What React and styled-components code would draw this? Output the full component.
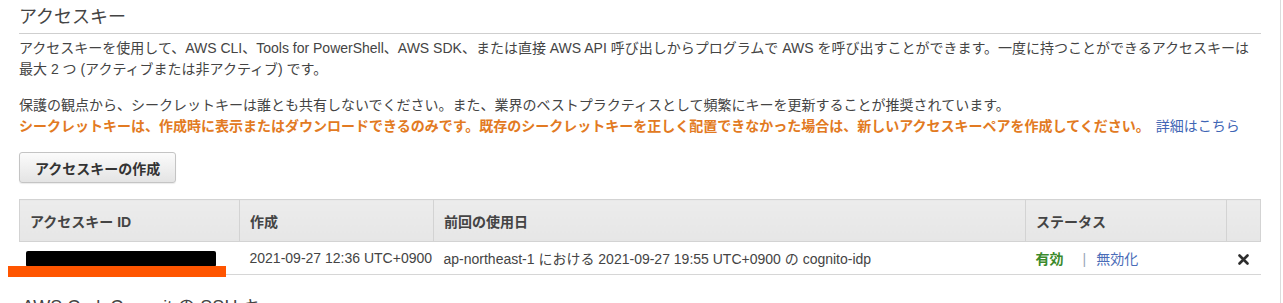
import React from "react";
import styled, { createGlobalStyle } from "styled-components";

const Global = createGlobalStyle`
  html, body { margin: 0; padding: 0; background: #fff; }
  body {
    font-family: "Liberation Sans", "Noto Sans CJK JP", sans-serif;
    font-size: 14px;
    color: #444;
  }
`;

const Panel = styled.div`
  width: 1242px;
  min-height: 303px;
  padding: 0 19px;
  border-right: 1px solid #dcdcdc;
  box-sizing: content-box;
  overflow: hidden;
`;

const Heading = styled.h2`
  margin: 0;
  padding: ${(p) => (p.$top ? "6px 0 5px" : "0")};
  font-size: 18px;
  line-height: 22px;
  font-weight: normal;
  color: #444;
  border-bottom: ${(p) => (p.$top ? "1px solid #cfcfcf" : "none")};
  margin-top: ${(p) => (p.$top ? "0" : "21px")};
  padding-left: ${(p) => (p.$top ? "0" : "3px")};
`;

const Intro = styled.div`
  padding-top: 4px;
`;

const Para = styled.p`
  margin: 0 0 15px;
  line-height: 21px;
  white-space: nowrap;
`;

const Warning = styled.span`
  color: #e27a22;
  font-weight: bold;
`;

const Link = styled.a`
  color: #3f66b5;
  text-decoration: none;
  margin-left: 6px;
  cursor: pointer;
`;

const CreateButton = styled.button`
  display: block;
  height: 31px;
  padding: 0 15px;
  margin: 0 0 16px;
  font-family: inherit;
  font-size: 14px;
  font-weight: bold;
  color: #333;
  background: linear-gradient(#fbfbfb, #e4e4e4);
  border: 1px solid #c4c4c4;
  border-radius: 3px;
  box-shadow: 0 1px 1px rgba(0, 0, 0, 0.08);
`;

const Table = styled.table`
  width: 1241px;
  border-collapse: collapse;
  table-layout: fixed;
`;

const Th = styled.th`
  height: 41px;
  padding: 0 10px;
  text-align: left;
  font-weight: bold;
  font-size: 14px;
  color: #444;
  background: linear-gradient(#ececec, #e6e6e6);
  border: 1px solid #d3d3d3;
`;

const Td = styled.td`
  position: relative;
  height: 32px;
  padding: 0 10px;
  font-size: 14px;
  color: #444;
  white-space: nowrap;
  border-bottom: 1px solid #d6d6d6;
  text-align: ${(p) => (p.$center ? "center" : "left")};
`;

const Redacted = styled.span`
  display: inline-block;
  width: 190px;
  height: 16px;
  background: #000;
  border-radius: 2px;
  vertical-align: middle;
  margin-left: -4px;
`;

const RedactBar = styled.span`
  position: absolute;
  left: -12px;
  top: 24px;
  width: 218px;
  height: 11px;
  background: #ff5500;
`;

const Active = styled.span`
  color: #3b8a2c;
  font-weight: bold;
`;

const Sep = styled.span`
  color: #9aa6b8;
  margin: 0 10px 0 19px;
`;

const Deactivate = styled.a`
  color: #4a6cb8;
  cursor: pointer;
`;

const CloseIcon = () => (
  <svg width="11" height="11" viewBox="0 0 11 11" style={{ verticalAlign: "middle" }}>
    <path d="M1.5 1.5 L9.5 9.5 M9.5 1.5 L1.5 9.5" stroke="#2e2e2e" strokeWidth="2.6" strokeLinecap="round" />
  </svg>
);

export default function App() {
  return (
    <>
      <Global />
      <Panel>
        <Heading $top>アクセスキー</Heading>
        <Intro>
          <Para>
            アクセスキーを使用して、AWS CLI、Tools for PowerShell、AWS SDK、または直接 AWS API 呼び出しからプログラムで AWS を呼び出すことができます。一度に持つことができるアクセスキーは
            <br />
            最大 2 つ (アクティブまたは非アクティブ) です。
          </Para>
          <Para>
            保護の観点から、シークレットキーは誰とも共有しないでください。また、業界のベストプラクティスとして頻繁にキーを更新することが推奨されています。
            <br />
            <Warning>
              シークレットキーは、作成時に表示またはダウンロードできるのみです。既存のシークレットキーを正しく配置できなかった場合は、新しいアクセスキーペアを作成してください。
            </Warning>
            <Link>詳細はこちら</Link>
          </Para>
        </Intro>
        <CreateButton>アクセスキーの作成</CreateButton>
        <Table>
          <colgroup>
            <col style={{ width: 220 }} />
            <col style={{ width: 194 }} />
            <col style={{ width: 592 }} />
            <col style={{ width: 201 }} />
            <col style={{ width: 34 }} />
          </colgroup>
          <thead>
            <tr>
              <Th>アクセスキー ID</Th>
              <Th>作成</Th>
              <Th>前回の使用日</Th>
              <Th>ステータス</Th>
              <Th />
            </tr>
          </thead>
          <tbody>
            <tr>
              <Td>
                <Redacted />
                <RedactBar />
              </Td>
              <Td>2021-09-27 12:36 UTC+0900</Td>
              <Td>ap-northeast-1 における 2021-09-27 19:55 UTC+0900 の cognito-idp</Td>
              <Td>
                <Active>有効</Active>
                <Sep>|</Sep>
                <Deactivate>無効化</Deactivate>
              </Td>
              <Td $center>
                <CloseIcon />
              </Td>
            </tr>
          </tbody>
        </Table>
        <Heading>AWS CodeCommit の SSH キー</Heading>
      </Panel>
    </>
  );
}
